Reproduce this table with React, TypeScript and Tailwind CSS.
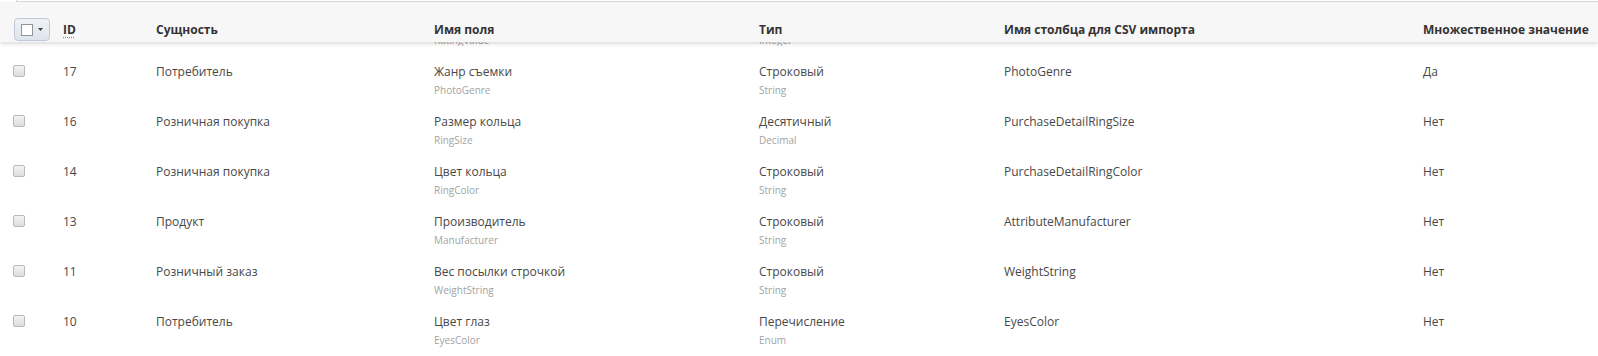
import React from 'react';

interface FieldRow {
  id: number;
  entity: string;
  name: string;
  systemName: string;
  type: string;
  typeName: string;
  csv: string;
  multiple: string;
}

const rows: FieldRow[] = [
  { id: 17, entity: 'Потребитель', name: 'Жанр съемки', systemName: 'PhotoGenre', type: 'Строковый', typeName: 'String', csv: 'PhotoGenre', multiple: 'Да' },
  { id: 16, entity: 'Розничная покупка', name: 'Размер кольца', systemName: 'RingSize', type: 'Десятичный', typeName: 'Decimal', csv: 'PurchaseDetailRingSize', multiple: 'Нет' },
  { id: 14, entity: 'Розничная покупка', name: 'Цвет кольца', systemName: 'RingColor', type: 'Строковый', typeName: 'String', csv: 'PurchaseDetailRingColor', multiple: 'Нет' },
  { id: 13, entity: 'Продукт', name: 'Производитель', systemName: 'Manufacturer', type: 'Строковый', typeName: 'String', csv: 'AttributeManufacturer', multiple: 'Нет' },
  { id: 11, entity: 'Розничный заказ', name: 'Вес посылки строчкой', systemName: 'WeightString', type: 'Строковый', typeName: 'String', csv: 'WeightString', multiple: 'Нет' },
  { id: 10, entity: 'Потребитель', name: 'Цвет глаз', systemName: 'EyesColor', type: 'Перечисление', typeName: 'Enum', csv: 'EyesColor', multiple: 'Нет' },
];

const cols = 'grid grid-cols-[50px_93px_278px_325px_245px_419px_1fr] pl-[13px]';

function RowCheckbox() {
  return (
    <span className="mt-[3px] block w-[12px] h-[12px] rounded-[2px] border border-[#b9b9b9] bg-gradient-to-b from-[#f4f4f4] to-[#dcdcdc]" />
  );
}

function Row({ row }: { row: FieldRow }) {
  return (
    <div className={`${cols} h-[50px] pt-[16px] items-start text-[12px] leading-[20px] text-[#484848]`}>
      <RowCheckbox />
      <div>{row.id}</div>
      <div>{row.entity}</div>
      <div>
        <div>{row.name}</div>
        <div className="text-[10px] leading-[16px] text-[#a3a3a3]">{row.systemName}</div>
      </div>
      <div>
        <div>{row.type}</div>
        <div className="text-[10px] leading-[16px] text-[#a3a3a3]">{row.typeName}</div>
      </div>
      <div>{row.csv}</div>
      <div>{row.multiple}</div>
    </div>
  );
}

export default function App() {
  return (
    <div className="w-[1598px] h-[356px] overflow-hidden bg-white font-['Open_Sans',sans-serif]">
      {/* edge of the filter panel above */}
      <div className="h-[2px] bg-white">
        <div className="ml-4 h-[2px] border-l border-b border-[#dcdcdc]" />
      </div>

      {/* Sticky header */}
      <div className={`${cols} relative z-10 h-[40px] pt-[15px] items-center bg-[#f7f7f7] shadow-[0_2px_4px_rgba(0,0,0,0.14)] text-[12px] font-bold text-[#333]`}>
        <button className="ml-px flex items-center gap-[5px] w-[36px] h-[23px] pl-[6px] rounded-[4px] border border-[#bfcad6] bg-gradient-to-b from-[#f0f3f6] to-[#dde4eb]">
          <span className="block w-[12px] h-[12px] border border-[#8d959e] bg-white" />
          <svg width="5" height="3" viewBox="0 0 5 3">
            <path d="M0 0h5L2.5 3z" fill="#444" />
          </svg>
        </button>
        <div>
          <span className="underline decoration-dotted decoration-[#888] underline-offset-[3px]">ID</span>
        </div>
        <div>Сущность</div>
        <div>Имя поля</div>
        <div>Тип</div>
        <div>Имя столбца для CSV импорта</div>
        <div>Множественное значение</div>
      </div>

      {/* bottom of the previous row, scrolled under the header */}
      <div className={`${cols} h-[4px] overflow-hidden text-[10px] leading-[16px] text-[#a3a3a3]`}>
        <div />
        <div />
        <div />
        <div className="-mt-[10px]">RatingValue</div>
        <div className="-mt-[10px]">Integer</div>
        <div />
        <div />
      </div>

      {rows.map((row) => (
        <Row key={row.id} row={row} />
      ))}
    </div>
  );
}
